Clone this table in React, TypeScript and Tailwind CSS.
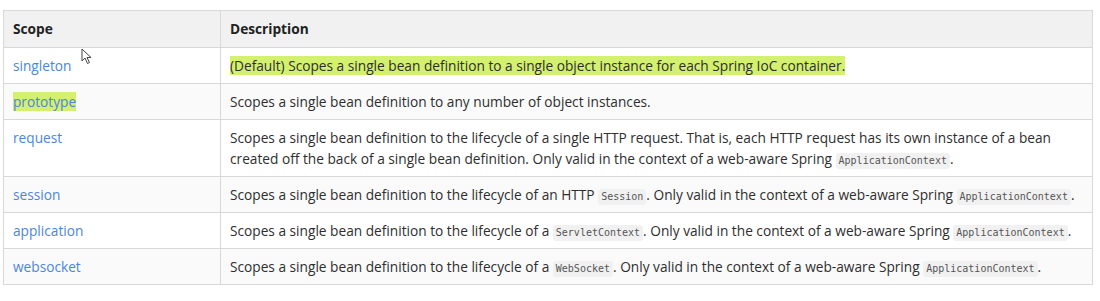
import type { ReactNode } from 'react';

type Row = {
  scope: string;
  desc: ReactNode;
  hlScope?: boolean;
};

const Code = ({ children }: { children: ReactNode }) => (
  <code className="inline-block rounded-[3px] bg-[#f1f1f1] px-[3px] font-['DejaVu_Sans_Mono',monospace] text-[10px] leading-[16px] text-[#555]">
    {children}
  </code>
);

const rows: Row[] = [
  {
    scope: 'singleton',
    desc: (
      <span className="bg-[#d3f06e]">
        (Default) Scopes a single bean definition to a single object instance for each Spring IoC container.
      </span>
    ),
  },
  {
    scope: 'prototype',
    hlScope: true,
    desc: 'Scopes a single bean definition to any number of object instances.',
  },
  {
    scope: 'request',
    desc: (
      <>
        Scopes a single bean definition to the lifecycle of a single HTTP request. That is, each HTTP request has its own
        instance of a bean created off the back of a single bean definition. Only valid in the context of a web-aware
        Spring <Code>ApplicationContext</Code>.
      </>
    ),
  },
  {
    scope: 'session',
    desc: (
      <>
        Scopes a single bean definition to the lifecycle of an HTTP <Code>Session</Code>. Only valid in the context of a
        web-aware Spring <Code>ApplicationContext</Code>.
      </>
    ),
  },
  {
    scope: 'application',
    desc: (
      <>
        Scopes a single bean definition to the lifecycle of a <Code>ServletContext</Code>. Only valid in the context of a
        web-aware Spring <Code>ApplicationContext</Code>.
      </>
    ),
  },
  {
    scope: 'websocket',
    desc: (
      <>
        Scopes a single bean definition to the lifecycle of a <Code>WebSocket</Code>. Only valid in the context of a
        web-aware Spring <Code>ApplicationContext</Code>.
      </>
    ),
  },
];

export default function App() {
  return (
    <div className="relative h-[301px] w-[1100px] bg-white pl-[3px] pt-[10px] font-['Open_Sans',sans-serif] text-[13.7px] leading-[21px] text-[#2e2e2e]">
      <table className="w-[1090px] border-collapse border border-[#d8d8d8]">
        <thead>
          <tr className="bg-[#f1f1f1]">
            <th className="w-[217px] border border-[#d8d8d8] px-[9px] py-[7px] text-left leading-[22px] font-bold text-[#222]">
              Scope
            </th>
            <th className="border border-[#d8d8d8] px-[9px] py-[7px] text-left leading-[22px] font-bold text-[#222]">
              Description
            </th>
          </tr>
        </thead>
        <tbody>
          {rows.map((r, i) => (
            <tr key={r.scope} className={i % 2 === 1 ? 'bg-[#fafafa]' : 'bg-white'}>
              <td className="border border-[#d8d8d8] px-[9px] py-[7px] align-top">
                <span className={r.hlScope ? 'bg-[#d3f06e] text-[#4b86dc]' : 'text-[#4b86dc]'}>{r.scope}</span>
              </td>
              <td className="border border-[#d8d8d8] px-[9px] py-[7px] align-top">{r.desc}</td>
            </tr>
          ))}
        </tbody>
      </table>

      {/* mouse cursor over the table */}
      <svg className="absolute left-[81px] top-[48px]" width="12" height="17" viewBox="0 0 12 17">
        <path
          d="M1 1 L1 13 L4 10 L6.5 15.5 L8.5 14.5 L6 9.5 L10 9.5 Z"
          fill="white"
          stroke="#444"
          strokeWidth="1"
          strokeLinejoin="round"
        />
      </svg>
    </div>
  );
}
